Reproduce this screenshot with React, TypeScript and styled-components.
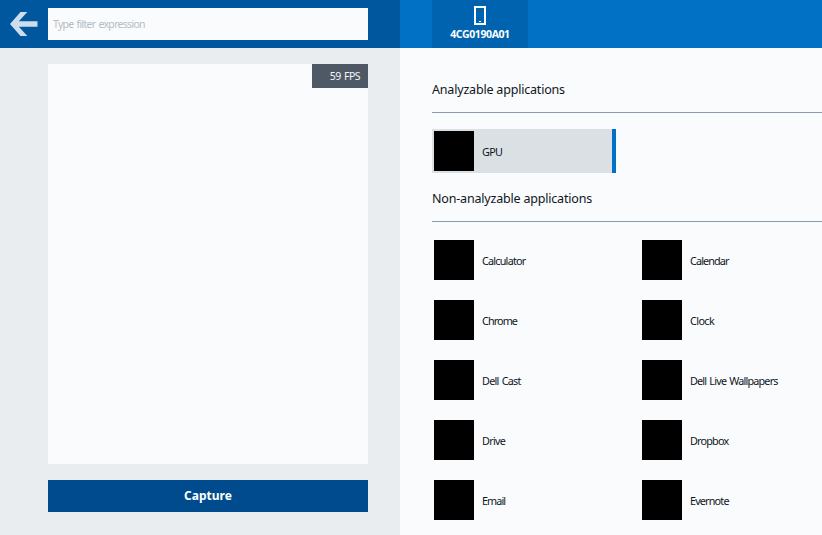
import React from 'react';
import styled, { createGlobalStyle } from 'styled-components';

const GlobalStyle = createGlobalStyle`
  * { box-sizing: border-box; }
  body {
    margin: 0;
    overflow: hidden;
    background: #f9fbfd;
    color: #10161c;
    font-family: "Noto Sans", "Open Sans", sans-serif;
  }
`;

const Window = styled.div`
  display: flex;
  width: 100vw;
  height: 100vh;
  overflow: hidden;
`;

const Sidebar = styled.aside`
  display: flex;
  flex-direction: column;
  flex: 0 0 400px;
  background: #e9edf0;
`;

const SearchBar = styled.header`
  display: flex;
  align-items: center;
  height: 48px;
  padding-right: 32px;
  background: #00579e;
`;

const BackButton = styled.button`
  flex: 0 0 48px;
  height: 48px;
  padding: 0;
  border: 0;
  background: none;
  svg { display: block; }
`;

const FilterInput = styled.input`
  flex: 1;
  min-width: 0;
  height: 32px;
  padding: 0 5px 0;
  border: 0;
  border-radius: 0;
  outline: 0;
  background: #f9fbfd;
  font: 10.5px "Noto Sans", sans-serif;
  letter-spacing: -0.7px;
  word-spacing: 1px;
  &::placeholder { color: #b5bdc5; opacity: 1; }
`;

const Preview = styled.div`
  display: flex;
  justify-content: flex-end;
  align-items: flex-start;
  height: 400px;
  margin: 16px 32px 16px 48px;
  background: #f9fbfd;
`;

const FpsCounter = styled.div`
  width: 56px;
  height: 24px;
  padding-right: 8px;
  background: #4e5965;
  color: #f4f6f8;
  font-size: 10.5px;
  line-height: 24px;
  letter-spacing: -0.5px;
  word-spacing: 1px;
  text-align: right;
`;

const CaptureButton = styled.button`
  height: 32px;
  margin: 0 32px 0 48px;
  padding: 0;
  border: 0;
  background: #004b8d;
  color: #fff;
  font: bold 12px/32px "Noto Sans", sans-serif;
`;

const Main = styled.main`
  flex: 1;
  min-width: 0;
`;

const DeviceBar = styled.nav`
  display: flex;
  height: 48px;
  padding-left: 32px;
  background: #0071c5;
`;

const DeviceTab = styled.div`
  display: flex;
  flex-direction: column;
  align-items: center;
  width: 96px;
  padding-top: 6px;
  background: #0063b0;
  color: #fff;
  font-size: 10.5px;
  font-weight: 700;
  line-height: 18px;
  letter-spacing: -0.4px;
`;

const Section = styled.section`
  padding-left: 32px;
`;

const SectionTitle = styled.h2<{ $first?: boolean }>`
  height: ${({ $first }) => ($first ? 65 : 49)}px;
  margin: 0 0 16px;
  padding-top: ${({ $first }) => ($first ? 33 : 17)}px;
  border-bottom: 1px solid #8b9bab;
  font-size: 12.5px;
  font-weight: 400;
  line-height: 17px;
  letter-spacing: -0.19px;
`;

const AppGrid = styled.div`
  display: grid;
  grid-template-columns: 184px 184px;
  gap: 16px 24px;
`;

const AppItem = styled.div<{ $selected?: boolean }>`
  display: flex;
  align-items: center;
  height: 44px;
  padding-left: 2px;
  border-right: 4px solid ${({ $selected }) => ($selected ? '#0071c5' : 'transparent')};
  background: ${({ $selected }) => ($selected ? '#dbe0e4' : 'transparent')};
`;

const AppIcon = styled.div`
  width: 40px;
  height: 40px;
  margin-right: 8px;
  background: #000;
`;

const AppName = styled.span<{ $tracking: number }>`
  padding-top: 1px;
  font-size: 10.8px;
  line-height: 16px;
  letter-spacing: ${({ $tracking }) => $tracking}px;
  word-spacing: 1px;
  white-space: nowrap;
`;

const apps: [string, number][] = [
  ['Calculator', -0.78],
  ['Calendar', -0.87],
  ['Chrome', -0.9],
  ['Clock', -0.6],
  ['Dell Cast', -0.74],
  ['Dell Live Wallpapers', -0.8],
  ['Drive', -0.7],
  ['Dropbox', -0.8],
  ['Email', -0.9],
  ['Evernote', -0.82],
];

export default function App() {
  return (
    <Window>
      <GlobalStyle />
      <Sidebar>
        <SearchBar>
          <BackButton aria-label="Back">
            <svg width="48" height="48" viewBox="0 0 48 48">
              <path d="M10 24 20.5 12h6.8l-8.4 9.3h18.6v5.4H18.9l8.4 9.3h-6.8z" fill="#ccdeec" />
            </svg>
          </BackButton>
          <FilterInput placeholder="Type filter expression" />
        </SearchBar>
        <Preview>
          <FpsCounter>59 FPS</FpsCounter>
        </Preview>
        <CaptureButton>Capture</CaptureButton>
      </Sidebar>
      <Main>
        <DeviceBar>
          <DeviceTab>
            <svg width="12" height="19" viewBox="0 0 12 19" shapeRendering="crispEdges">
              <path d="M0 0h12v19H0zM2 2v15h8V2z" fill="#fff" fillRule="evenodd" />
              <path d="M5 15h2v1H5z" fill="#fff" />
            </svg>
            <span>4CG0190A01</span>
          </DeviceTab>
        </DeviceBar>
        <Section>
          <SectionTitle $first>Analyzable applications</SectionTitle>
          <AppGrid>
            <AppItem $selected>
              <AppIcon />
              <AppName $tracking={-0.65}>GPU</AppName>
            </AppItem>
          </AppGrid>
        </Section>
        <Section>
          <SectionTitle>Non-analyzable applications</SectionTitle>
          <AppGrid>
            {apps.map(([name, tracking]) => (
              <AppItem key={name}>
                <AppIcon />
                <AppName $tracking={tracking}>{name}</AppName>
              </AppItem>
            ))}
          </AppGrid>
        </Section>
      </Main>
    </Window>
  );
}
